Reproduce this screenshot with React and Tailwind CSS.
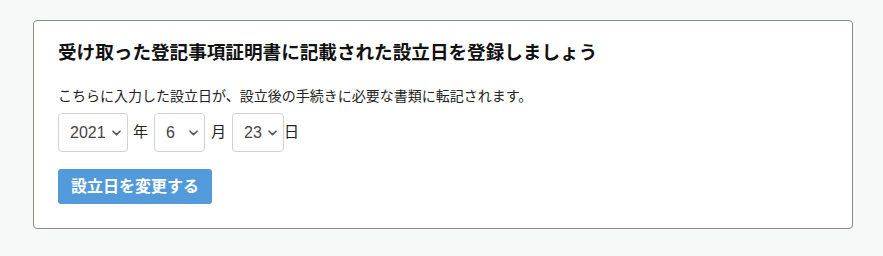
import { useState } from "react";

const font = { fontFamily: '"Liberation Sans", "Noto Sans CJK JP", sans-serif' };

function DateSelect({ value, options, onChange, width }) {
  return (
    <div className={`relative h-[39px] ${width}`}>
      <select
        value={value}
        onChange={(e) => onChange(e.target.value)}
        className="h-full w-full appearance-none rounded-[4px] border border-[#d2d2d2] bg-white pl-[11px] text-[16px] text-[#444] outline-none"
      >
        {options.map((o) => (
          <option key={o} value={o}>
            {o}
          </option>
        ))}
      </select>
      <svg
        className="pointer-events-none absolute right-[7px] top-1/2 -translate-y-1/2"
        width="9"
        height="6"
        viewBox="0 0 9 6"
        fill="none"
      >
        <path d="M1 1.2L4.5 4.6L8 1.2" stroke="#555" strokeWidth="1.6" strokeLinecap="round" strokeLinejoin="round" />
      </svg>
    </div>
  );
}

const range = (a, b) => Array.from({ length: b - a + 1 }, (_, i) => String(a + i));

export default function App() {
  const [year, setYear] = useState("2021");
  const [month, setMonth] = useState("6");
  const [day, setDay] = useState("23");

  return (
    <div className="min-h-[256px] bg-[#f7f9f8] pt-[20px]" style={font}>
      <div className="ml-[33px] w-[820px] rounded-[4px] border border-[#8c8c84] bg-white px-[24px] pb-[24px] pt-[20px]">
        <h2 className="text-[18.6px] font-bold leading-[24px] text-[#111]">
          受け取った登記事項証明書に記載された設立日を登録しましょう
        </h2>
        <p className="mt-[21px] text-[14px] leading-[20px] text-[#222]">
          こちらに入力した設立日が、設立後の手続きに必要な書類に転記されます。
        </p>

        <div className="mt-[7px] flex items-center text-[15px] text-[#222]">
          <DateSelect value={year} options={range(2000, 2030)} onChange={setYear} width="w-[70px]" />
          <span className="ml-[5px] mr-[6px]">年</span>
          <DateSelect value={month} options={range(1, 12)} onChange={setMonth} width="w-[51px]" />
          <span className="ml-[6px] mr-[6px]">月</span>
          <DateSelect value={day} options={range(1, 31)} onChange={setDay} width="w-[52px]" />
          <span>日</span>
        </div>

        <button className="mt-[17px] h-[35px] rounded-[3px] bg-[#529ad9] px-[13px] text-[16px] font-bold text-white">
          設立日を変更する
        </button>
      </div>
    </div>
  );
}
